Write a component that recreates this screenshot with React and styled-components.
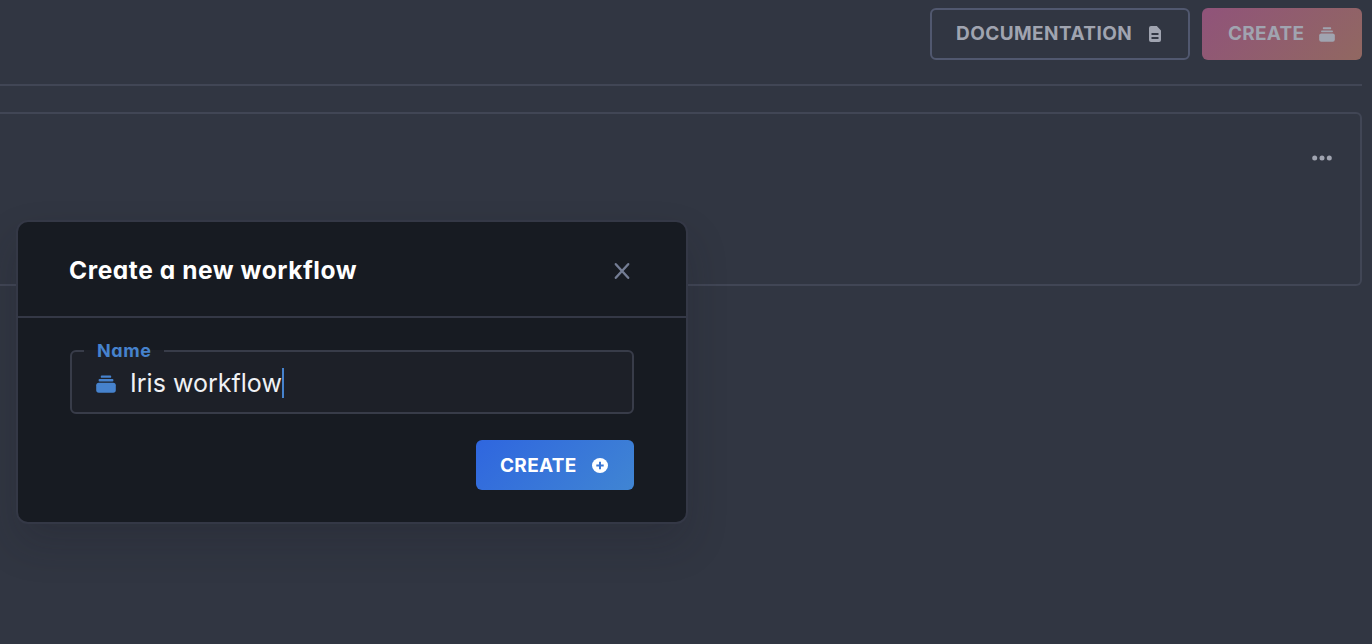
import React from "react";
import styled, { createGlobalStyle } from "styled-components";

const GlobalStyle = createGlobalStyle`
  *, *::before, *::after { box-sizing: border-box; }
  html, body { margin: 0; height: 100%; background: #313642; overflow: hidden; }
  body { font-family: Inter, "Liberation Sans", sans-serif; font-feature-settings: "cv11"; }
  button { font-family: inherit; margin: 0; border: 0; }
`;

const Page = styled.main`
  height: 644px;
  overflow: hidden;
  padding-right: 10px;
  background: #313642;
`;

const Toolbar = styled.header`
  display: flex;
  justify-content: flex-end;
  gap: 12px;
  height: 86px;
  padding-top: 8px;
  border-bottom: 2px solid #414655;
`;

const Button = styled.button`
  display: flex;
  align-items: center;
  justify-content: space-between;
  width: ${(p) => p.$width}px;
  height: ${(p) => p.$height || 52}px;
  padding: 0 ${(p) => p.$padRight}px 0 ${(p) => p.$padLeft}px;
  border: ${(p) => p.$border || "0"};
  border-radius: 6px;
  background: ${(p) => p.$background || "transparent"};
  color: ${(p) => p.$color || "#a0a4b0"};
  font-size: 19px;
  font-weight: 700;
  line-height: 24px;
  letter-spacing: ${(p) => p.$spacing || 0}px;
  white-space: nowrap;
`;

const ButtonLabel = styled.span`
  padding-top: ${(p) => p.$shift || 0}px;
`;

const Card = styled.section`
  display: flex;
  justify-content: flex-end;
  height: 174px;
  margin-top: 26px;
  padding: 34px 28px 0 0;
  border: 2px solid #414655;
  border-left: 0;
  border-radius: 0 6px 6px 0;
`;

const Dialog = styled.section`
  position: absolute;
  left: 16px;
  top: 220px;
  width: 672px;
  height: 304px;
  border: 2px solid #343846;
  border-radius: 12px;
  background: #171b22;
  box-shadow: 0 20px 40px rgba(25, 25, 35, 0.2);
`;

const DialogHeader = styled.div`
  display: flex;
  align-items: center;
  justify-content: space-between;
  height: 96px;
  padding: 2px 56px 0 51px;
  border-bottom: 2px solid #343846;
`;

const Title = styled.h1`
  margin: 0;
  color: #fff;
  font-size: 24.5px;
  font-weight: 700;
  line-height: 32px;
  letter-spacing: 0.58px;
  white-space: nowrap;
`;

const CloseButton = styled.button`
  display: flex;
  padding: 2px 0 0;
  background: none;
`;

const DialogBody = styled.div`
  display: flex;
  flex-direction: column;
  align-items: flex-end;
  padding: 22px 52px 0;
`;

const Field = styled.fieldset`
  width: 564px;
  height: 74px;
  margin: 0;
  padding: 0 0 0 12px;
  border: 2px solid #383c49;
  border-radius: 6px;
  background: #1d2028;
`;

const Label = styled.legend`
  width: 80px;
  height: 22px;
  padding: 0 0 0 13px;
  color: #4682cd;
  font-size: 18px;
  font-weight: 700;
  line-height: 22px;
  letter-spacing: 0.6px;
`;

const InputRow = styled.div`
  display: flex;
  align-items: center;
  height: 44px;
  padding-left: 12px;
`;

const FieldIcon = styled.span`
  display: flex;
  color: #4682cd;
`;

const Value = styled.span`
  margin: 0 0 2px 14px;
  color: #f0f1f4;
  font-size: 25px;
  line-height: 32px;
  letter-spacing: 0.02px;
  white-space: nowrap;
`;

const Caret = styled.span`
  width: 2px;
  height: 30px;
  margin-bottom: 2px;
  background: #4682cd;
`;

const Actions = styled.div`
  margin-top: 26px;
`;

const StackIcon = ({ width, height }) => (
  <svg width={width} height={height} viewBox="0 0 20 18" preserveAspectRatio="none" fill="currentColor" aria-hidden="true">
    <rect x="4.8" y="0.4" width="10.4" height="2.4" rx="0.9" />
    <rect x="2.6" y="4.1" width="14.8" height="2.3" rx="0.9" />
    <rect x="0.2" y="7.7" width="19.6" height="10" rx="2.6" />
  </svg>
);

const DocumentIcon = () => (
  <svg width="12" height="16" viewBox="0 0 12 16" aria-hidden="true">
    <path fill="currentColor" fillRule="evenodd" d="M2 0H7.8L12 4.5V14a2 2 0 0 1-2 2H2a2 2 0 0 1-2-2V2a2 2 0 0 1 2-2ZM2.5 7v2h7V7ZM2.5 11v2h7v-2Z" />
  </svg>
);

const PlusIcon = () => (
  <svg width="16" height="15" viewBox="0 0 16 15" aria-hidden="true">
    <ellipse cx="8" cy="7.5" rx="8" ry="7.5" fill="#fff" />
    <path d="M4.3 7.5h7.4M8 3.8v7.4" stroke="#3b77d5" strokeWidth="2" />
  </svg>
);

const MoreIcon = () => (
  <svg width="20" height="20" viewBox="0 0 20 20" fill="#a0a4b0" aria-hidden="true">
    <circle cx="2.7" cy="10" r="2.5" />
    <circle cx="10" cy="10" r="2.5" />
    <circle cx="17.3" cy="10" r="2.5" />
  </svg>
);

const CloseIcon = () => (
  <svg width="16" height="18" viewBox="0 0 16 18" aria-hidden="true">
    <path d="M1.8 2.2 14.2 15.8M14.2 2.2 1.8 15.8" stroke="#747d94" strokeWidth="2.4" strokeLinecap="round" />
  </svg>
);

export default function App() {
  return (
    <>
      <GlobalStyle />
      <Page>
        <Toolbar>
          <Button $width={260} $padLeft={24} $padRight={27} $border="2px solid #51586f" $spacing={0.42}>
            <ButtonLabel>DOCUMENTATION</ButtonLabel>
            <DocumentIcon />
          </Button>
          <Button $width={160} $padLeft={26} $padRight={27} $spacing={0.25} $background="linear-gradient(135deg, #90537a, #916861)">
            <ButtonLabel>CREATE</ButtonLabel>
            <StackIcon width={16} height={15} />
          </Button>
        </Toolbar>
        <Card>
          <MoreIcon />
        </Card>
        <Dialog role="dialog" aria-label="Create a new workflow">
          <DialogHeader>
            <Title>Create a new workflow</Title>
            <CloseButton aria-label="Close"><CloseIcon /></CloseButton>
          </DialogHeader>
          <DialogBody>
            <Field>
              <Label>Name</Label>
              <InputRow>
                <FieldIcon><StackIcon width={20} height={18} /></FieldIcon>
                <Value>Iris workflow</Value>
                <Caret />
              </InputRow>
            </Field>
            <Actions>
              <Button $width={158} $height={50} $padLeft={24} $padRight={26} $color="#fff" $spacing={0.3} $background="linear-gradient(135deg, #2f66df, #4085d3)">
                <ButtonLabel $shift={2}>CREATE</ButtonLabel>
                <PlusIcon />
              </Button>
            </Actions>
          </DialogBody>
        </Dialog>
      </Page>
    </>
  );
}
